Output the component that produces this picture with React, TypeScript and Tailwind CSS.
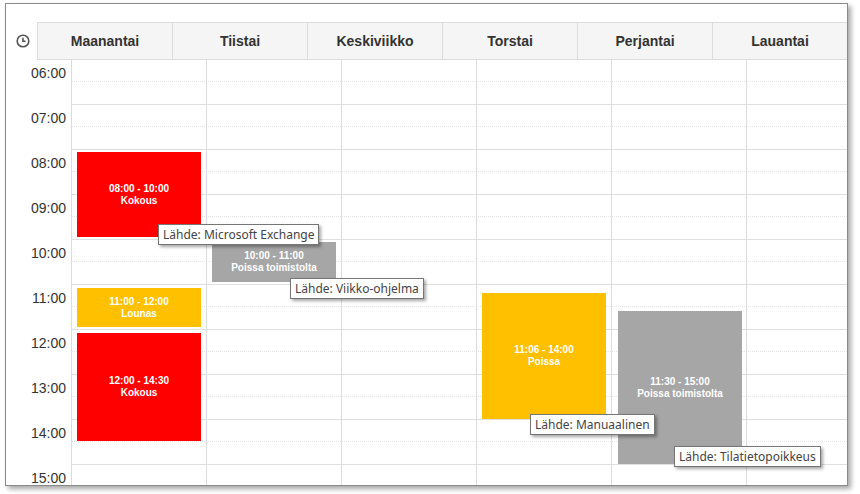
const days = ['Maanantai', 'Tiistai', 'Keskiviikko', 'Torstai', 'Perjantai', 'Lauantai'];
const hours = ['06:00', '07:00', '08:00', '09:00', '10:00', '11:00', '12:00', '13:00', '14:00', '15:00'];

const events = [
  { left: 6, top: 92, w: 124, h: 85, bg: 'bg-[#ff0000]', time: '08:00 - 10:00', title: 'Kokous' },
  { left: 141, top: 182, w: 124, h: 40, bg: 'bg-[#a6a6a6]', time: '10:00 - 11:00', title: 'Poissa toimistolta' },
  { left: 6, top: 228, w: 124, h: 39, bg: 'bg-[#ffc000]', time: '11:00 - 12:00', title: 'Lounas' },
  { left: 6, top: 273, w: 124, h: 108, bg: 'bg-[#ff0000]', time: '12:00 - 14:30', title: 'Kokous' },
  { left: 411, top: 233, w: 124, h: 126, bg: 'bg-[#ffc000]', time: '11:06 - 14:00', title: 'Poissa' },
  { left: 547, top: 251, w: 124, h: 153, bg: 'bg-[#a6a6a6]', time: '11:30 - 15:00', title: 'Poissa toimistolta' },
];

const tips = [
  { left: 87, top: 164, text: 'Lähde: Microsoft Exchange' },
  { left: 219, top: 218, text: 'Lähde: Viikko-ohjelma' },
  { left: 459, top: 354, text: 'Lähde: Manuaalinen' },
  { left: 603, top: 386, text: 'Lähde: Tilatietopoikkeus' },
];

export default function App() {
  return (
    <div className="w-[860px] h-[494px] bg-white p-[3px_12px_8px_5px]" style={{ fontFamily: 'Arial, "Liberation Sans", sans-serif' }}>
      <div className="h-[483px] border border-[#8a8a8a] shadow-[3px_3px_5px_rgba(0,0,0,0.35)] overflow-hidden bg-white pt-[18px]">
        <div className="flex h-[38px]">
          <div className="w-[65px] flex items-center justify-center pl-[2px]">
            <svg width="14" height="14" viewBox="0 0 14 14" fill="none" stroke="#555" strokeWidth="1.6">
              <circle cx="7" cy="7" r="5.8" />
              <path d="M7 3.8V7.3H9.6" />
            </svg>
          </div>
          {days.map((d) => (
            <div key={d} className="w-[135px] shrink-0 bg-[#f5f5f5] border-l border-t border-b border-[#dcdcdc] flex items-center justify-center text-[14px] font-bold text-[#333]">
              {d}
            </div>
          ))}
        </div>
        <div className="flex relative">
          <div className="w-[65px]">
            {hours.map((h) => (
              <div key={h} className="h-[45px] text-right pr-[5px] pt-[3px] text-[14px] text-[#333]">{h}</div>
            ))}
          </div>
          <div className="flex-1 relative">
            {hours.map((h) => (
              <div key={h} className="h-[45px] border-b border-[#e0e0e0]">
                <div className="h-[22px] border-b border-dotted border-[#e6e6e6]" />
              </div>
            ))}
            <div className="absolute inset-0 flex">
              {days.map((d) => (
                <div key={d} className="w-[135px] shrink-0 border-l border-[#dcdcdc]" />
              ))}
            </div>
            {events.map((e, i) => (
              <div
                key={i}
                className={`absolute ${e.bg} flex flex-col items-center justify-center text-white text-[10px] font-bold leading-[12px]`}
                style={{ left: e.left, top: e.top, width: e.w, height: e.h }}
              >
                <div>{e.time}</div>
                <div>{e.title}</div>
              </div>
            ))}
            {tips.map((t, i) => (
              <div
                key={i}
                className="absolute bg-white border border-[#767676] shadow-[2px_2px_3px_rgba(0,0,0,0.35)] px-[4px] h-[21px] flex items-center text-[12px] text-[#444] whitespace-nowrap"
                style={{ left: t.left, top: t.top, fontFamily: '"Noto Sans", "Open Sans", sans-serif' }}
              >
                {t.text}
              </div>
            ))}
          </div>
        </div>
      </div>
    </div>
  );
}
